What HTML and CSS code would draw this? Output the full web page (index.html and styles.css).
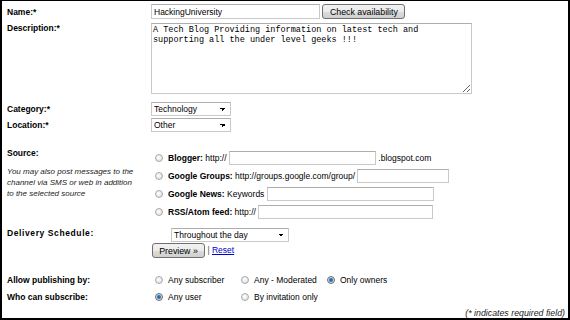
FILE: index.html
```html
<!doctype html>
<html lang="en">
  <head>
    <title>Create channel</title>
    <meta charset="UTF-8">
    <link rel="stylesheet" href="styles.css">
  </head>
  <body>
    <div class="page">
      <div class="row row-name">
        <div class="lbl">Name:*</div>
        <div class="fld"><input type="text" class="txt name-txt" value="HackingUniversity"> <button type="button" class="btn check-btn">Check availability</button></div>
      </div>
      <div class="row row-desc">
        <div class="lbl">Description:*</div>
        <div class="fld"><textarea class="desc">A Tech Blog Providing information on latest tech and
supporting all the under level geeks !!!</textarea></div>
      </div>
      <div class="row row-cat">
        <div class="lbl">Category:*</div>
        <div class="fld"><select class="sel small-sel"><option>Technology</option></select></div>
      </div>
      <div class="row row-loc">
        <div class="lbl">Location:*</div>
        <div class="fld"><select class="sel small-sel"><option>Other</option></select></div>
      </div>

      <div class="row row-source">
        <div class="lbl">
          <div class="line">Source:</div>
          <div class="note">You may also post messages to the<br>channel via SMS or web in addition<br>to the selected source</div>
        </div>
        <div class="fld src-list">
          <div class="src"><input type="radio" name="src" class="rad"><b>Blogger:</b> http:// <input type="text" class="txt blog-txt"> .blogspot.com</div>
          <div class="src"><input type="radio" name="src" class="rad"><b>Google Groups:</b> http://groups.google.com/group/ <input type="text" class="txt groups-txt"></div>
          <div class="src"><input type="radio" name="src" class="rad"><b>Google News:</b> Keywords <input type="text" class="txt news-txt"></div>
          <div class="src"><input type="radio" name="src" class="rad"><b>RSS/Atom feed:</b> http:// <input type="text" class="txt rss-txt"></div>
        </div>
      </div>

      <div class="row row-deliv">
        <div class="lbl line deliv-lbl">Delivery Schedule:</div>
        <div class="fld">
          <select class="sel deliv-sel"><option>Throughout the day</option></select>
          <div class="actions"><button type="button" class="btn prev-btn">Preview &raquo;</button> <span class="sep">|</span> <a href="#">Reset</a></div>
        </div>
      </div>

      <div class="row row-allow">
        <div class="lbl">Allow publishing by:</div>
        <div class="fld opts">
          <label class="opt"><input type="radio" name="pub" class="rad">Any subscriber</label>
          <label class="opt"><input type="radio" name="pub" class="rad">Any - Moderated</label>
          <label class="opt"><input type="radio" name="pub" class="rad" checked>Only owners</label>
        </div>
      </div>
      <div class="row row-who">
        <div class="lbl">Who can subscribe:</div>
        <div class="fld opts">
          <label class="opt"><input type="radio" name="who" class="rad" checked>Any user</label>
          <label class="opt"><input type="radio" name="who" class="rad">By invitation only</label>
        </div>
      </div>

      <div class="required">(* indicates required field)</div>
    </div>
  </body>
</html>
```

FILE: styles.css
```css
body {
  margin: 0;
  background: #fff;
  font-family: "Liberation Sans", Arial, sans-serif;
  font-size: 8.5px;
  color: #000;
}

.page {
  width: 570px;
  height: 320px;
  box-sizing: border-box;
  border: 2px solid #000;
  border-top-width: 1px;
  padding: 0 3px 0 5px;
}

.row {
  display: flex;
  align-items: center;
}

.lbl {
  width: 144px;
  flex: none;
  font-weight: bold;
  white-space: nowrap;
}

.fld {
  white-space: nowrap;
}

/* text boxes */
.txt,
.desc,
.sel {
  box-sizing: border-box;
  margin: 0;
  border: 1px solid #c9c9c9;
  border-top-color: #adadad;
  background: #fff;
  font-family: "Liberation Sans", Arial, sans-serif;
  font-size: 8.5px;
  color: #000;
  outline: none;
}

.txt {
  height: 14px;
  padding: 0 2px;
  vertical-align: top;
}

.name-txt {
  width: 169px;
  height: 15px;
}
.blog-txt { width: 147px; }
.groups-txt { width: 92px; }
.news-txt { width: 167px; }
.rss-txt { width: 175px; }

.desc {
  display: block;
  width: 321px;
  height: 71px;
  padding: 1px 1px;
  font-family: "Liberation Mono", "Courier New", monospace;
  font-size: 8.5px;
  line-height: 10px;
  resize: both;
}

.sel {
  appearance: none;
  -webkit-appearance: none;
  display: block;
  height: 14px;
  padding: 0 2px;
  line-height: 12px;
  background-image: linear-gradient(45deg, transparent 50%, #000 50%),
    linear-gradient(135deg, #000 50%, transparent 50%);
  background-position: right 7px center, right 4px center;
  background-size: 3px 3px, 3px 3px;
  background-repeat: no-repeat;
}
.small-sel { width: 80px; }
.deliv-sel {
  width: 118px;
  margin-left: 20px;
}

/* buttons */
.btn {
  box-sizing: border-box;
  margin: 0;
  height: 15px;
  padding: 0;
  border: 1px solid #707070;
  border-radius: 3px;
  background: linear-gradient(#f2f2f2 0%, #ebebeb 50%, #dddddd 51%, #cfcfcf 100%);
  font-family: "Liberation Sans", Arial, sans-serif;
  font-size: 8.8px;
  color: #000;
  vertical-align: top;
}
.check-btn { width: 83px; }
.prev-btn { width: 53px; margin-left: 1px; }

/* radios */
.rad {
  appearance: none;
  -webkit-appearance: none;
  box-sizing: border-box;
  width: 8px;
  height: 8px;
  margin: 0 5px 0 4px;
  border: 1px solid #a8a8a8;
  border-radius: 50%;
  background: radial-gradient(circle at 40% 40%, #ffffff, #d8d8d8);
  vertical-align: -1px;
}
.rad:checked {
  border-color: #6c6c6c;
  background: radial-gradient(circle, #1d5aa0 0, #3b82c8 1.6px, #dcdcdc 2.6px);
}

/* rows */
.row-name { margin-top: 3px; }

.row-desc {
  margin-top: 4px;
  align-items: flex-start;
}
.row-desc .lbl { line-height: 10px; }

.row-cat { margin-top: 8px; }
.row-loc { margin-top: 2px; }

.row-source {
  margin-top: 16px;
  align-items: flex-start;
}
.line { line-height: 10px; }
.note {
  margin-top: 8px;
  font-weight: normal;
  font-style: italic;
  font-size: 8px;
  line-height: 11px;
  color: #222;
}
.src-list { padding-top: 3px; }
.src {
  height: 14px;
  line-height: 14px;
  margin-bottom: 4px;
}

.row-deliv {
  margin-top: 5px;
  align-items: flex-start;
}
.deliv-lbl { letter-spacing: 0.6px; }
.actions {
  margin-top: 1px;
  height: 15px;
  line-height: 15px;
}
.sep { color: #555; }
.actions a { color: #0000cc; }

.row-allow { margin-top: 15px; height: 14px; }
.row-who { margin-top: 3px; height: 14px; }

.opts {
  display: grid;
  grid-template-columns: 86px 86px 86px;
}
.opt {
  display: flex;
  align-items: center;
}
.opt .rad { vertical-align: middle; }

.required {
  margin-top: 4px;
  text-align: right;
  font-style: italic;
  font-size: 8.8px;
  line-height: 10px;
  color: #222;
}
```
